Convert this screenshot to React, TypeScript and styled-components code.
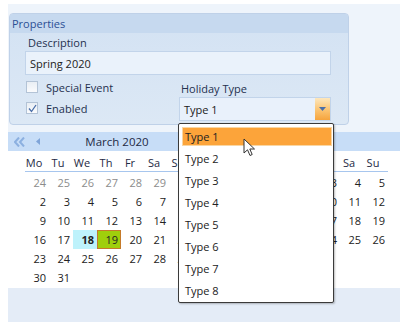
import React from 'react';
import styled, { createGlobalStyle } from 'styled-components';

const GlobalStyle = createGlobalStyle`
	body {
		margin: 0;
		background: #ffffff;
		font-family: "Open Sans", "Noto Sans", sans-serif;
		font-size: 11px;
		color: #1e2a44;
	}
`;

//CSS
const Page = styled.div`
	position: relative;
	width: 406px;
	height: 322px;
	overflow: hidden;
	padding: 4px 6px 0 8px;
	box-sizing: border-box;
`;

const Frame = styled.div`
	height: 318px;
	background: #eef4fb;
	display: flex;
	flex-flow: column;
	padding-top: 9px;
	box-sizing: border-box;
`;

const Group = styled.div`
	margin-left: 1px;
	width: 340px;
	height: 112px;
	box-sizing: border-box;
	border: 1px solid #bfd1e8;
	border-radius: 4px;
	background: linear-gradient(#d3e2f3, #dce8f5);
	display: flex;
	flex-flow: column;
	overflow: hidden;
`;

const GroupHeader = styled.div`
	height: 19px;
	background: #c6d9ef;
	color: #2b4f95;
	padding-left: 2px;
	display: flex;
	align-items: center;
`;

const GroupBody = styled.div`
	padding: 1px 17px 0 15px;
	display: flex;
	flex-flow: column;
`;

const Label = styled.div<{ $indent?: number }>`
	height: 17px;
	line-height: 17px;
	padding-left: ${p => p.$indent ?? 3}px;
	color: #25314f;
`;

const TextBox = styled.div`
	height: 24px;
	box-sizing: border-box;
	border: 1px solid #c2d4ea;
	background: #eaf2fb;
	padding-left: 4px;
	display: flex;
	align-items: center;
	color: #222;
`;

const Lower = styled.div`
	display: flex;
	margin-top: 2px;
`;

const ChecksCol = styled.div`
	width: 154px;
	display: flex;
	flex-flow: column;
	gap: 9px;
	padding-top: 4px;
`;

const CheckRow = styled.div`
	display: flex;
	align-items: center;
	gap: 8px;
	padding-left: 1px;
	height: 12px;
	color: #25314f;
`;

const CheckBox = styled.div`
	width: 12px;
	height: 12px;
	box-sizing: border-box;
	border: 1px solid #b3c3d6;
	background: linear-gradient(#e9eef4, #fafbfd);
	display: flex;
	align-items: center;
	justify-content: center;
`;

const ComboCol = styled.div`
	width: 152px;
	display: flex;
	flex-flow: column;
	padding-top: 3px;
`;

const Combo = styled.div`
	height: 24px;
	box-sizing: border-box;
	border: 1px solid #c2d4ea;
	background: #e9f1fb;
	display: flex;
	align-items: stretch;
`;

const ComboText = styled.div`
	flex: 1;
	padding-left: 4px;
	display: flex;
	align-items: center;
	color: #222;
`;

const ComboButton = styled.div`
	width: 15px;
	background: linear-gradient(#fde7bd, #fbc370 55%, #f6a43d);
	display: flex;
	align-items: center;
	justify-content: center;
`;

const Calendar = styled.div`
	margin-top: 7px;
	flex: 1;
	display: flex;
	flex-flow: column;
`;

const CalHeader = styled.div`
	height: 19px;
	background: #c7ddf7;
	display: flex;
	align-items: center;
	padding-left: 6px;
`;

const NavArrow = styled.div<{ $w: number }>`
	width: ${p => p.$w}px;
	display: flex;
	align-items: center;
`;

const MonthTitle = styled.div`
	width: 134px;
	text-align: center;
	color: #1e2a44;
	font-size: 11.5px;
`;

const CalBody = styled.div`
	height: 137px;
	background: #ffffff;
	display: flex;
	padding-left: 17px;
	gap: 27px;
`;

const Month = styled.div`
	width: 168px;
	display: grid;
	grid-template-columns: repeat(7, 24px);
	grid-auto-rows: 19px;
	align-content: start;
	padding-top: 3px;
`;

const DayName = styled.div`
	height: 17px;
	line-height: 17px;
	text-align: center;
	padding-right: 6px;
	border-bottom: 1px solid #a7c6ee;
	color: #1e2a44;
	margin-bottom: 2px;
`;

const DayCell = styled.div<{ $muted?: boolean; $today?: boolean; $selected?: boolean; $hidden?: boolean }>`
	box-sizing: border-box;
	text-align: right;
	padding-right: 3px;
	line-height: 19px;
	color: ${p => (p.$muted ? '#8c8c8c' : '#222')};
	visibility: ${p => (p.$hidden ? 'hidden' : 'visible')};
	font-weight: ${p => (p.$today ? 'bold' : 'normal')};
	background: ${p => (p.$today ? '#bef2fb' : p.$selected ? '#9fcf0c' : 'transparent')};
	border: ${p => (p.$selected ? '1px solid #c57a2a' : 'none')};
	line-height: ${p => (p.$selected ? '17px' : '19px')};
	padding-right: ${p => (p.$selected ? '2px' : '3px')};
`;

const CalFooter = styled.div`
	flex: 1;
	background: #e4ecf7;
`;

const DropList = styled.div`
	position: absolute;
	left: 178px;
	top: 123px;
	width: 156px;
	height: 180px;
	box-sizing: border-box;
	border: 1px solid #3a3a3a;
	border-radius: 2px;
	background: #ffffff;
	box-shadow: 1px 1px 2px rgba(0, 0, 0, 0.25);
	padding: 1px 1px 1px 3px;
	display: flex;
	flex-flow: column;
`;

const DropItem = styled.div`
	height: 22px;
	display: flex;
	align-items: center;
`;

const DropItemInner = styled.div<{ $active?: boolean }>`
	flex: 1;
	height: 19px;
	margin-top: 1px;
	box-sizing: border-box;
	padding-left: 2px;
	display: flex;
	align-items: center;
	color: #222;
	background: ${p => (p.$active ? '#fca43a' : 'transparent')};
	border: 1px solid ${p => (p.$active ? '#f9d6a3' : 'transparent')};
`;

const Cursor = styled.svg`
	position: absolute;
	left: 243px;
	top: 138px;
`;

type Day = { n: number; muted?: boolean; today?: boolean; selected?: boolean; hidden?: boolean };

const dayNames = ['Mo', 'Tu', 'We', 'Th', 'Fr', 'Sa', 'Su'];

const march: Day[] = [
	...[24, 25, 26, 27, 28, 29].map(n => ({ n, muted: true })),
	{ n: 1 },
	...Array.from({ length: 31 }, (_, i) => ({ n: i + 1 }))
		.slice(1)
		.map(d => ({ ...d, today: d.n === 18, selected: d.n === 19 })),
];

const april: Day[] = [
	{ n: 30, hidden: true },
	{ n: 31, hidden: true },
	...Array.from({ length: 26 }, (_, i) => ({ n: i + 1 })),
];

const types = [1, 2, 3, 4, 5, 6, 7, 8];

function MonthGrid({ days }: { days: Day[] }) {
	return (
		<Month>
			{dayNames.map(d => (
				<DayName key={d}>{d}</DayName>
			))}
			{days.map((d, i) => (
				<DayCell key={i} $muted={d.muted} $today={d.today} $selected={d.selected} $hidden={d.hidden}>
					{d.n}
				</DayCell>
			))}
		</Month>
	);
}

export default function App() {
	return (
		<Page>
			<GlobalStyle />
			<Frame>
				<Group>
					<GroupHeader>Properties</GroupHeader>
					<GroupBody>
						<Label>Description</Label>
						<TextBox>Spring 2020</TextBox>
						<Lower>
							<ChecksCol>
								<CheckRow>
									<CheckBox />
									Special Event
								</CheckRow>
								<CheckRow>
									<CheckBox>
										<svg width="9" height="9" viewBox="0 0 9 9">
											<path d="M1 4.5 L3.5 7.5 L8 1" fill="none" stroke="#4a6ea8" strokeWidth="1.3" />
										</svg>
									</CheckBox>
									Enabled
								</CheckRow>
							</ChecksCol>
							<ComboCol>
								<Label $indent={2}>Holiday Type</Label>
								<Combo>
									<ComboText>Type 1</ComboText>
									<ComboButton>
										<svg width="7" height="4" viewBox="0 0 7 4">
											<path d="M0 0 H7 L3.5 4 Z" fill="#4b6fa8" />
										</svg>
									</ComboButton>
								</Combo>
							</ComboCol>
						</Lower>
					</GroupBody>
				</Group>

				<Calendar>
					<CalHeader>
						<NavArrow $w={22}>
							<svg width="11" height="10" viewBox="0 0 11 10">
								<path d="M5 0.5 L1 5 L5 9.5 M10 0.5 L6 5 L10 9.5" fill="none" stroke="#8cb0e0" strokeWidth="2" />
							</svg>
						</NavArrow>
						<NavArrow $w={14}>
							<svg width="4" height="7" viewBox="0 0 4 7">
								<path d="M4 0 V7 L0 3.5 Z" fill="#7fa4d8" />
							</svg>
						</NavArrow>
						<MonthTitle>March 2020</MonthTitle>
					</CalHeader>
					<CalBody>
						<MonthGrid days={march} />
						<MonthGrid days={april} />
					</CalBody>
					<CalFooter />
				</Calendar>
			</Frame>

			<DropList>
				{types.map(t => (
					<DropItem key={t}>
						<DropItemInner $active={t === 1}>Type {t}</DropItemInner>
					</DropItem>
				))}
			</DropList>

			<Cursor width="14" height="20" viewBox="0 0 14 20">
				<path d="M1 1 V15 L4.5 11.8 L7 17.5 L9.2 16.5 L6.8 11 H11.5 Z" fill="#ffffff" stroke="#333" strokeWidth="1" strokeLinejoin="round" />
			</Cursor>
		</Page>
	);
}
